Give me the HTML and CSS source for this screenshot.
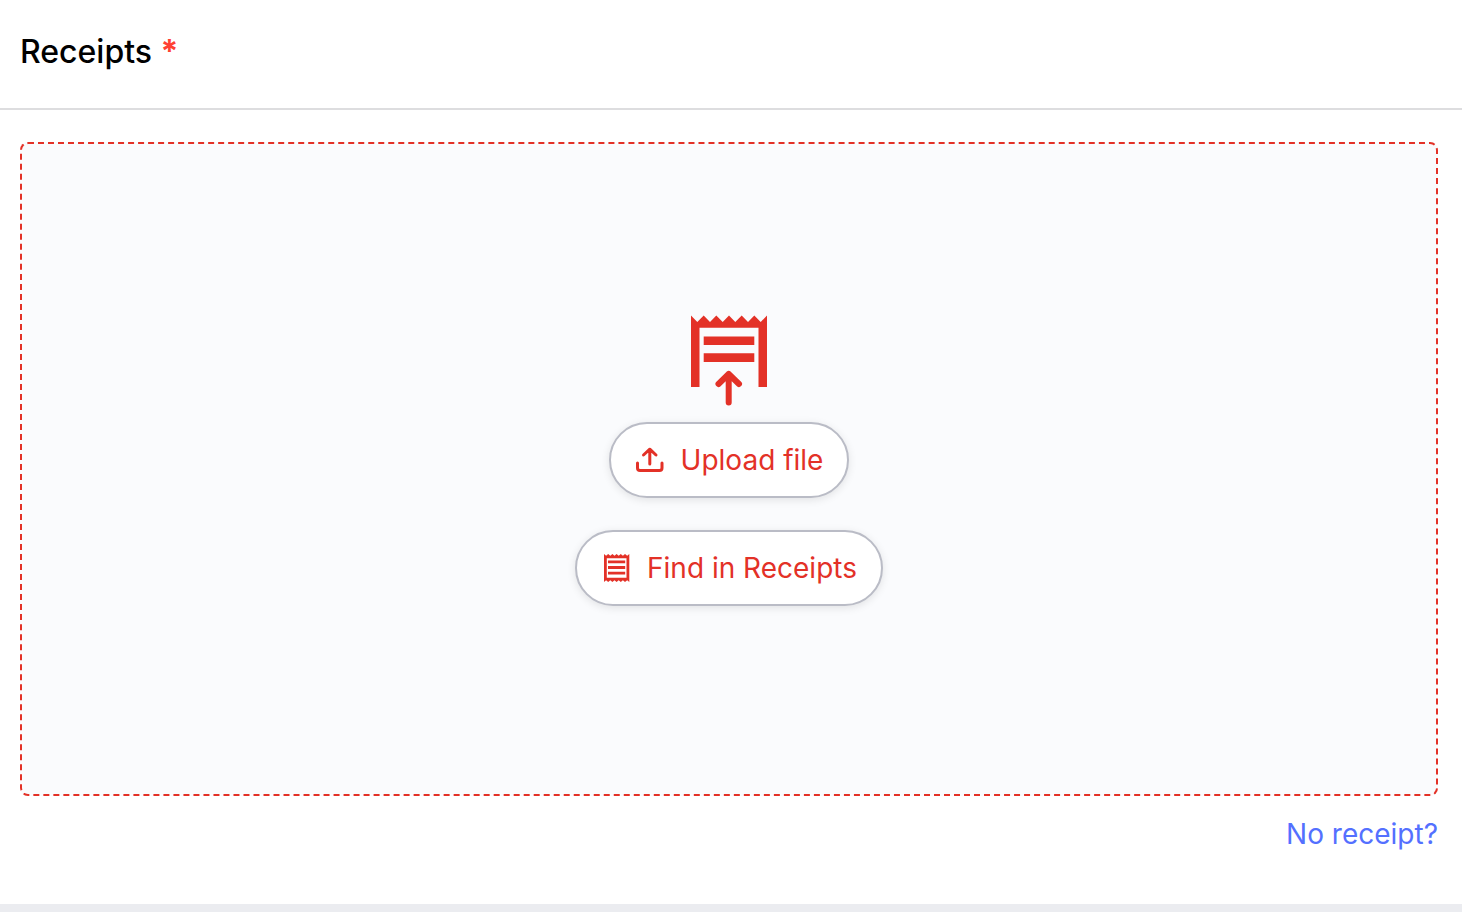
FILE: index.html
```html
<!DOCTYPE html>
<html lang="en">

<head>
    <meta charset="UTF-8">
    <meta name="viewport" content="width=device-width, initial-scale=1.0">
    <title>Receipts</title>
    <link rel="stylesheet" href="styles.css">
</head>

<body>
    <section class="receipts">
        <header class="receipts-header">
            <h2>Receipts <span class="required">*</span></h2>
        </header>

        <div class="receipts-body">
            <div class="dropzone">
                <svg class="dropzone-icon" viewBox="0 0 76 90" aria-hidden="true">
                    <path fill="currentColor" d="M0 -0.5L6.3 6L12.7 -0.5L19 6L25.3 -0.5L31.7 6L38 -0.5L44.3 6L50.7 -0.5L57 6L63.3 -0.5L69.7 6L76 -0.5V71H67.5V11.7H8.5V71H0Z" />
                    <path fill="currentColor" d="M12.7 20.5H63.3V29H12.7ZM12.7 37.3H63.3V46H12.7Z" />
                    <path class="line" stroke-width="6" d="M27.5 68L37.7 58L48 68M37.7 58V86.6" />
                </svg>

                <div class="actions">
                    <button type="button" class="btn">
                        <svg class="btn-icon" viewBox="0 0 30 28" aria-hidden="true">
                            <path class="line" stroke-width="3" d="M2.5 17V22C2.5 23.6 3.4 24.5 5 24.5H24.5C26.1 24.5 27 23.6 27 22V17M14.8 18V3.5M8.5 9L14.8 3.2L21 9" />
                        </svg>
                        Upload file
                    </button>
                    <button type="button" class="btn">
                        <svg class="btn-icon" viewBox="0 0 30 28" aria-hidden="true">
                            <path fill="currentColor" fill-rule="evenodd" d="M3 0L5.1 1.8L7.2 0L9.3 1.8L11.4 0L13.5 1.8L15.6 0L17.7 1.8L19.8 0L21.9 1.8L24 0L26.2 1.8L28.3 0V28L26.2 26.2L24 28L21.9 26.2L19.8 28L17.7 26.2L15.6 28L13.5 26.2L11.4 28L9.3 26.2L7.2 28L5.1 26.2L3 28ZM5.8 4.2V23.8H25.5V4.2Z" />
                            <path fill="currentColor" d="M7 6.4H24.2V9.2H7ZM7 12.1H24.2V14.9H7ZM7 17.8H24.2V20.6H7Z" />
                        </svg>
                        Find in Receipts
                    </button>
                </div>
            </div>

            <a class="no-receipt" href="#">No receipt?</a>
        </div>
    </section>
</body>

</html>
```
FILE: styles.css
```css
* {
    box-sizing: border-box;
}

body {
    margin: 0;
    font-family: Inter, "Liberation Sans", sans-serif;
    font-size: 28px;
    line-height: 40px;
    color: #000;
    background: #fff;
}

.receipts {
    border-bottom: 8px solid #ebecf0;
}

.receipts-header {
    padding: 32px 20px 36px;
    border-bottom: 2px solid #dddddf;
}

.receipts-header h2 {
    margin: 0;
    font-size: 32px;
    font-weight: 500;
    line-height: 40px;
}

.required {
    color: #ff4133;
    font-weight: 700;
}

.receipts-body {
    display: flex;
    flex-direction: column;
    padding: 32px 24px 50px 20px;
}

.dropzone {
    display: flex;
    flex-direction: column;
    align-items: center;
    justify-content: center;
    min-height: 654px;
    border: 2px dashed #e33127;
    border-radius: 8px;
    background: #fafbfd;
    color: #e33127;
}

.dropzone-icon {
    width: 76px;
    height: 90px;
    overflow: visible;
}

.actions {
    display: flex;
    flex-direction: column;
    align-items: center;
    gap: 32px;
    padding: 16px 0;
}

.btn {
    display: flex;
    align-items: center;
    gap: 16px;
    padding: 16px 24px;
    border: 2px solid #babcc6;
    border-radius: 38px;
    background: #fff;
    box-shadow: 0 2px 8px rgba(0, 0, 0, 0.1);
    color: inherit;
    font: inherit;
    cursor: pointer;
}

.btn-icon {
    width: 30px;
    height: 28px;
}

.line {
    fill: none;
    stroke: currentColor;
    stroke-linecap: round;
    stroke-linejoin: round;
}

.no-receipt {
    align-self: flex-end;
    margin-top: 18px;
    color: #5470ff;
    text-decoration: none;
}
```
